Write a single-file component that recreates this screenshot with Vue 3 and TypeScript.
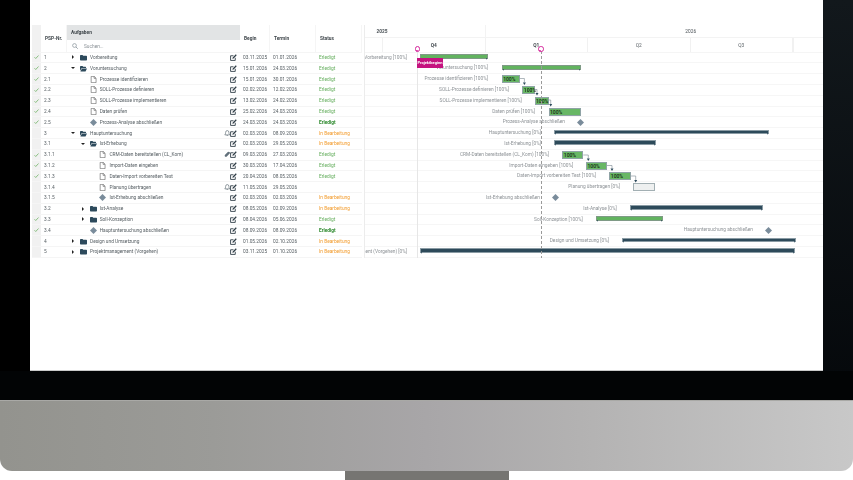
<template>
  <div class="monitor">
    <svg class="defs" width="0" height="0">
      <symbol id="closed" viewBox="0 0 14 12"><path d="M0 2.5Q0 1 1.5 1H5l1.5 1.5h6Q14 2.500 14 4v6.500Q14 12 12.500 12h-11Q0 12 0 10.500z" fill="#2d4a5c" /></symbol>
      <symbol id="open" viewBox="0 0 14 12"><path d="M0 2.500Q0 1 1.500 1H5l1.500 1.500h4.500Q12 2.500 12 4v1H3.500L0 10.500zM3.800 6H14l-3 6H.8z" fill="#2d4a5c" /></symbol>
      <symbol id="file" viewBox="0 0 10 12"><path d="M1 .6h5.200L9.400 3.800v7.600H1zM6 .8v3.200h3.200" fill="#fff" stroke="#555" stroke-width="1" /></symbol>
      <symbol id="ms" viewBox="0 0 12 12"><path d="M6 0l6 6-6 6-6-6z" fill="#7a8c9b" /></symbol>
      <symbol id="edit" viewBox="0 0 12 12"><path d="M9 6.500V11H1V3h5" fill="none" stroke="#2f3d46" stroke-width="1.500" /><path d="M4 8.200l.6-2.200L10 .6l1.500 1.500L6.200 7.500z" fill="#2f3d46" /></symbol>
      <symbol id="bell" viewBox="0 0 12 12"><path d="M6 1Q9 1 9 4.500Q9 7.500 10.500 9h-9Q3 7.500 3 4.500Q3 1 6 1zM4.800 10.300h2.400" fill="none" stroke="#5a6770" stroke-width="1.200" /></symbol>
      <symbol id="clip" viewBox="0 0 12 12"><path d="M10.500 2.200Q9 .4 7 2L2 7q-1.500 1.800 0 3.200t3.200 0l5.300-5.400q1.200-1.400 0-2.600z" fill="#62717b" /></symbol>
    </svg>

    <div class="bezel">
      <main class="screen">
        <section class="gantt">
          <div class="table">
            <div class="table-head">
              <div class="tick-col"></div>
              <div class="head-cell psp-col">PSP-Nr.</div>
              <div class="task-head">
                <div class="task-title">Aufgaben</div>
                <div class="search">
                  <svg class="search-icon" viewBox="0 0 12 12"><circle cx="5" cy="5" r="3.800" fill="none" stroke="#7d8a92" stroke-width="1.300" /><path d="M8 8l3.500 3.500" stroke="#7d8a92" stroke-width="1.500" /></svg>
                  <span>Suchen...</span>
                </div>
              </div>
              <div class="head-cell begin-col">Begin</div>
              <div class="head-cell end-col">Termin</div>
              <div class="head-cell status-col">Status</div>
            </div>

            <div v-for="row in rows" :key="row.nr" class="table-row">
              <div class="tick-col">
                <svg v-if="row.done" class="check" viewBox="0 0 10 8"><path d="M1 4.500l2.500 2.500L9 1" fill="none" stroke="#5cab50" stroke-width="1.400" /></svg>
              </div>
              <div class="psp-col cell">{{ row.nr }}</div>
              <div class="task-col" :style="{ paddingLeft: 2 + row.depth * 9.7 + 'px' }">
                <span class="caret" :class="row.kind"></span>
                <svg class="type-icon"><use :href="'#' + row.kind" /></svg>
                <span class="task-name">{{ row.name }}</span>
                <svg v-if="row.flag" class="flag-icon"><use :href="'#' + row.flag" /></svg>
                <svg class="edit-icon"><use href="#edit" /></svg>
              </div>
              <div class="begin-col cell">{{ row.begin }}</div>
              <div class="end-col cell">{{ row.end }}</div>
              <div class="status-col cell" :class="statusClass(row)">{{ row.status }}</div>
            </div>
          </div>

          <div class="chart">
            <div class="years">
              <div class="year y2025">2025</div>
              <div class="year y2026">2026</div>
            </div>
            <div class="quarters">
              <div class="quarter stub"></div>
              <div v-for="q in quarters" :key="q" class="quarter full" :class="{ strong: q === 'Q4' || q === 'Q1' }">{{ q }}</div>
              <div class="quarter"></div>
            </div>

            <div v-for="row in rows" :key="row.nr" class="chart-row">
              <span class="bar-label" :style="{ left: row.bar.labelEnd - 365 + 'px' }">{{ row.bar.label }}</span>
              <span
                v-if="row.bar.type === 'ms'"
                class="ms-mark"
                :style="{ left: row.bar.x - 365 + 'px' }"
              ><svg><use href="#ms" /></svg></span>
              <span
                v-else
                class="bar"
                :class="row.bar.type"
                :style="{ left: row.bar.x - 365 + 'px', width: (row.bar.w ?? 0) + 'px' }"
              >{{ row.bar.type === 'task' ? '100%' : '' }}</span>
            </div>

            <!-- Projektbeginn / heute und Abhaengigkeiten liegen ueber den Zeilen -->
            <div class="start-line"></div>
            <div class="today-line"></div>
            <span class="pin start-pin"></span>
            <span class="pin today-pin"></span>
            <span class="start-tag">Projektbeginn</span>
            <svg class="links" viewBox="365 25 458 236">
              <g v-for="l in links" :key="l.x">
                <path :d="`M${l.from} ${l.y}H${l.x}V${l.to - 2}`" fill="none" stroke="#7b8890" stroke-width=".6" />
                <path :d="`M${l.x - 1.500} ${l.to - 2}h3l-1.500 2.500z`" fill="#2d4a5c" />
              </g>
            </svg>
          </div>
        </section>
      </main>
    </div>
    <div class="chin"></div>
    <div class="stand"></div>
  </div>
</template>

<script setup lang="ts">
type Kind = 'closed' | 'open' | 'file' | 'ms'
type BarType = 'sum-green' | 'sum-dark' | 'task' | 'empty' | 'ms'

interface Bar {
  type: BarType
  x: number
  w?: number
  label: string
  labelEnd: number
}

interface Row {
  nr: string
  name: string
  depth: number
  kind: Kind
  done?: boolean
  flag?: 'bell' | 'clip'
  begin: string
  end: string
  status: string
  bar: Bar
}

const OK = 'Erledigt'
const WIP = 'In Bearbeitung'

const rows: Row[] = [
  { nr: '1', name: 'Vorbereitung', depth: 0, kind: 'closed', done: true, begin: '03.11.2025', end: '01.01.2026', status: OK, bar: { type: 'sum-green', x: 420, w: 68, label: 'Vorbereitung [100%]', labelEnd: 407 } },
  { nr: '2', name: 'Voruntersuchung', depth: 0, kind: 'open', done: true, begin: '15.01.2026', end: '24.03.2026', status: OK, bar: { type: 'sum-green', x: 502, w: 79, label: 'Voruntersuchung [100%]', labelEnd: 488 } },
  { nr: '2.1', name: 'Prozesse identifizieren', depth: 1, kind: 'file', done: true, begin: '15.01.2026', end: '30.01.2026', status: OK, bar: { type: 'task', x: 501.7, w: 18.5, label: 'Prozesse identifizieren [100%]', labelEnd: 488 } },
  { nr: '2.2', name: 'SOLL-Prozesse definieren', depth: 1, kind: 'file', done: true, begin: '02.02.2026', end: '12.02.2026', status: OK, bar: { type: 'task', x: 522.3, w: 12.7, label: 'SOLL-Prozesse definieren [100%]', labelEnd: 509 } },
  { nr: '2.3', name: 'SOLL-Prozesse implementieren', depth: 1, kind: 'file', done: true, begin: '13.02.2026', end: '24.02.2026', status: OK, bar: { type: 'task', x: 534.5, w: 14, label: 'SOLL-Prozesse implementieren [100%]', labelEnd: 521.7 } },
  { nr: '2.4', name: 'Daten prüfen', depth: 1, kind: 'file', done: true, begin: '25.02.2026', end: '24.03.2026', status: OK, bar: { type: 'task', x: 548.5, w: 32, label: 'Daten prüfen [100%]', labelEnd: 535 } },
  { nr: '2.5', name: 'Prozess-Analyse abschließen', depth: 1, kind: 'ms', done: true, begin: '24.03.2026', end: '24.03.2026', status: OK, bar: { type: 'ms', x: 580.3, label: 'Prozess-Analyse abschließen', labelEnd: 565 } },
  { nr: '3', name: 'Hauptuntersuchung', depth: 0, kind: 'open', flag: 'bell', begin: '02.03.2026', end: '08.09.2026', status: WIP, bar: { type: 'sum-dark', x: 554, w: 215, label: 'Hauptuntersuchung [0%]', labelEnd: 541 } },
  { nr: '3.1', name: 'Ist-Erhebung', depth: 1, kind: 'open', begin: '02.03.2026', end: '29.05.2026', status: WIP, bar: { type: 'sum-dark', x: 554, w: 101.5, label: 'Ist-Erhebung [0%]', labelEnd: 541 } },
  { nr: '3.1.1', name: 'CRM-Daten bereitstellen (CL_Kom)', depth: 2, kind: 'file', done: true, flag: 'clip', begin: '09.03.2026', end: '27.03.2026', status: OK, bar: { type: 'task', x: 562.3, w: 21, label: 'CRM-Daten bereitstellen (CL_Kom) [100%]', labelEnd: 549 } },
  { nr: '3.1.2', name: 'Import-Daten eingeben', depth: 2, kind: 'file', done: true, begin: '30.03.2026', end: '17.04.2026', status: OK, bar: { type: 'task', x: 586, w: 21, label: 'Import-Daten eingeben [100%]', labelEnd: 573.3 } },
  { nr: '3.1.3', name: 'Daten-Import vorbereiten Test', depth: 2, kind: 'file', done: true, begin: '20.04.2026', end: '08.05.2026', status: OK, bar: { type: 'task', x: 609.3, w: 21.7, label: 'Daten-Import vorbereiten Test [100%]', labelEnd: 596 } },
  { nr: '3.1.4', name: 'Planung übertragen', depth: 2, kind: 'file', flag: 'bell', begin: '11.05.2026', end: '29.05.2026', status: '', bar: { type: 'empty', x: 633.3, w: 21.7, label: 'Planung übertragen [0%]', labelEnd: 620 } },
  { nr: '3.1.5', name: 'Ist-Erhebung abschließen', depth: 2, kind: 'ms', begin: '02.03.2026', end: '02.03.2026', status: WIP, bar: { type: 'ms', x: 555.3, label: 'Ist-Erhebung abschließen', labelEnd: 540 } },
  { nr: '3.2', name: 'Ist-Analyse', depth: 1, kind: 'closed', begin: '08.05.2026', end: '02.09.2026', status: WIP, bar: { type: 'sum-dark', x: 630, w: 132.7, label: 'Ist-Analyse [0%]', labelEnd: 616.7 } },
  { nr: '3.3', name: 'Soll-Konzeption', depth: 1, kind: 'closed', done: true, begin: '08.04.2026', end: '05.06.2026', status: OK, bar: { type: 'sum-green', x: 596, w: 67, label: 'Soll-Konzeption [100%]', labelEnd: 582.7 } },
  { nr: '3.4', name: 'Hauptuntersuchung abschließen', depth: 1, kind: 'ms', done: true, begin: '08.09.2026', end: '08.09.2026', status: OK, bar: { type: 'ms', x: 768.7, label: 'Hauptuntersuchung abschließen', labelEnd: 753 } },
  { nr: '4', name: 'Design und Umsetzung', depth: 0, kind: 'closed', begin: '01.05.2026', end: '02.10.2026', status: WIP, bar: { type: 'sum-dark', x: 622, w: 174, label: 'Design und Umsetzung [0%]', labelEnd: 609 } },
  { nr: '5', name: 'Projektmanagement (Vorgehen)', depth: 0, kind: 'closed', begin: '03.11.2025', end: '01.10.2026', status: WIP, bar: { type: 'sum-dark', x: 420, w: 375, label: 'Projektmanagement (Vorgehen) [0%]', labelEnd: 407 } }
]

const quarters = ['Q4', 'Q1', 'Q2', 'Q3']

const links = [
  { from: 520, y: 78.5, x: 524.4, to: 84.5 },
  { from: 535, y: 89.5, x: 537, to: 95 },
  { from: 548.5, y: 100, x: 550.7, to: 106 },
  { from: 583.3, y: 155, x: 588.3, to: 160.5 },
  { from: 607, y: 165.5, x: 612, to: 170.5 },
  { from: 631, y: 176, x: 635.7, to: 182 }
]

const statusClass = (row: Row) => {
  if (row.status === WIP) return 'wip'
  return row.kind === 'ms' ? 'ok-strong' : 'ok'
}
</script>

<style scoped>
.defs {
  position: absolute;
}

.monitor {
  width: 853px;
  height: 480px;
  overflow: hidden;
  display: flex;
  flex-direction: column;
  font-family: Roboto, "Liberation Sans", sans-serif;
  font-size: 4.8px;
  color: #555d62;
}

.bezel {
  height: 400px;
  flex: none;
  box-sizing: border-box;
  padding: 0 30px 29px 30px;
  background:
    linear-gradient(#020405, #020405) left bottom / 100% 29px no-repeat,
    linear-gradient(#12181c, #05080b) right top / 30px 100% no-repeat,
    #000;
}

.screen {
  height: 100%;
  box-sizing: border-box;
  padding: 25px 0 0 2px;
  background: #fff;
  border-bottom: 1px solid #c9c9c9;
}

.gantt {
  display: flex;
  gap: 3px;
  filter: blur(0.4px);
}

.table {
  width: 330px;
  flex: none;
}

.table-head {
  display: flex;
  height: 27.6px;
  border-bottom: 1px solid #f5f5f5;
  box-sizing: border-box;
}

.table-row {
  display: flex;
  align-items: stretch;
  height: 10.8px;
  box-sizing: border-box;
  border-bottom: 0.5px solid #f5f5f5;
}

.tick-col {
  width: 9px;
  flex: none;
  background: #f1f1f1;
  display: flex;
  align-items: center;
  justify-content: center;
}

.check {
  width: 5px;
  height: 4px;
}

.psp-col {
  width: 26px;
  flex: none;
}

.begin-col {
  width: 30px;
  flex: none;
}

.end-col {
  width: 46px;
  flex: none;
}

.status-col {
  flex: 1;
}

.head-cell {
  display: flex;
  align-items: center;
  padding-left: 4px;
  box-sizing: border-box;
  font-weight: 700;
  color: #3f464b;
  border-right: 0.5px solid #f5f5f5;
}

.cell {
  display: flex;
  align-items: center;
  padding-left: 3px;
  box-sizing: border-box;
}

.ok {
  color: #63ad5c;
}

.ok-strong {
  color: #2f8a2f;
  font-weight: 700;
}

.wip {
  color: #f29b2c;
}

.task-head {
  width: 173px;
  flex: none;
}

.task-title {
  height: 15px;
  background: #e2e4e5;
  padding-left: 4px;
  display: flex;
  align-items: center;
  font-weight: 700;
  color: #3f464b;
}

.search {
  height: 12px;
  padding-left: 5px;
  display: flex;
  align-items: center;
  gap: 6px;
  color: #8b9297;
}

.search-icon {
  width: 6px;
  height: 6px;
}

.task-col {
  width: 173px;
  flex: none;
  box-sizing: border-box;
  display: flex;
  align-items: center;
  padding-right: 3px;
}

.caret {
  width: 8px;
  flex: none;
  display: flex;
  justify-content: center;
}

.caret.closed::before {
  content: "";
  border-left: 2.5px solid #222;
  border-top: 2px solid transparent;
  border-bottom: 2px solid transparent;
}

.caret.open::before {
  content: "";
  border-top: 2.5px solid #222;
  border-left: 2px solid transparent;
  border-right: 2px solid transparent;
}

.type-icon {
  width: 7px;
  height: 7px;
  flex: none;
  margin: 0 3px;
}

.task-name {
  flex: 1;
  white-space: nowrap;
}

.flag-icon {
  width: 6.500px;
  height: 6.500px;
  flex: none;
}

.edit-icon {
  width: 7px;
  height: 7px;
  flex: none;
}

.chart {
  position: relative;
  flex: 1;
  overflow: hidden;
  border-left: 1px solid #ececec;
  margin-left: -1px;
}

.years {
  display: flex;
  height: 13px;
  border-bottom: 0.5px solid #f3f3f3;
  box-sizing: border-box;
}

.year {
  display: flex;
  align-items: center;
  justify-content: center;
  box-sizing: border-box;
  color: #4a5156;
}

.y2025 {
  width: 120.500px;
  padding-right: 85.500px;
  font-weight: 700;
  border-right: 0.5px solid #f3f3f3;
}

.y2026 {
  flex: 1;
  padding-left: 73px;
}

.quarters {
  display: flex;
  height: 14.600px;
  border-bottom: 1px solid #f5f5f5;
  box-sizing: border-box;
}

.quarter {
  display: flex;
  align-items: center;
  justify-content: center;
  box-sizing: border-box;
  padding-top: 1px;
  color: #5c6368;
  border-right: 0.5px solid #f1f1f1;
}

.strong {
  font-weight: 700;
  color: #3f464b;
}

.stub {
  width: 18px;
}

.full {
  width: 102.500px;
}

.chart-row {
  position: relative;
  height: 10.800px;
  box-sizing: border-box;
  border-bottom: 0.5px solid #f6f6f6;
}

.bar-label {
  position: absolute;
  top: 2px;
  transform: translateX(-100%);
  white-space: nowrap;
  color: #8d9296;
}

.bar {
  position: absolute;
  box-sizing: border-box;
}

.task {
  top: 1px;
  height: 8px;
  background: #68b765;
  border: 0.7px solid #8fa3a5;
  color: #10260f;
  font-size: 5px;
  font-weight: 500;
  line-height: 7px;
  padding-left: 0.500px;
}

.empty {
  top: 1px;
  height: 8px;
  background: #eef0f0;
  border: 0.8px solid #a2afb3;
}

.sum-green,
.sum-dark {
  top: 1.500px;
  height: 4.800px;
}

.sum-green {
  background: #62b35f;
  border: 0.6px solid #7f9a86;
}

.sum-dark {
  background: #2d4a5a;
  border: 0.4px solid #8a9ba4;
}

.sum-green::before,
.sum-green::after,
.sum-dark::before,
.sum-dark::after {
  content: "";
  position: absolute;
  top: 100%;
  border-top: 2.500px solid #2d4a5a;
}

.sum-green::before,
.sum-dark::before {
  left: 0;
  border-right: 1.500px solid transparent;
}

.sum-green::after,
.sum-dark::after {
  right: 0;
  border-left: 1.500px solid transparent;
}

.ms-mark {
  position: absolute;
  top: 1.400px;
  width: 7px;
  height: 7px;
  margin-left: -3.500px;
}

.ms-mark svg {
  display: block;
  width: 7px;
  height: 7px;
}

.start-line {
  position: absolute;
  left: 52px;
  top: 27px;
  bottom: 0;
  border-left: 0.7px solid #e6e6e6;
}

.today-line {
  position: absolute;
  left: 175.500px;
  top: 26px;
  height: 208px;
  border-left: 1.200px dashed #9a9a9a;
}

.pin {
  position: absolute;
  top: 21.300px;
  width: 5.500px;
  height: 5.500px;
  box-sizing: border-box;
  border-radius: 50%;
  border: 1.500px solid #d4259a;
  background: #fff;
}

.pin::after {
  content: "";
  position: absolute;
  left: 0;
  top: 2.500px;
  border-top: 2px solid #d4259a;
  border-left: 1.250px solid transparent;
  border-right: 1.250px solid transparent;
}

.start-pin {
  left: 49.750px;
}

.today-pin {
  left: 173.250px;
}

.start-tag {
  position: absolute;
  left: 52px;
  top: 33px;
  width: 26px;
  height: 9.500px;
  display: flex;
  align-items: center;
  justify-content: center;
  background: #c5127f;
  color: #fff;
  font-size: 4px;
  font-weight: 700;
  white-space: nowrap;
}

.links {
  position: absolute;
  left: 0;
  top: 0;
  width: 458px;
  height: 236px;
  pointer-events: none;
}

.chin {
  height: 71px;
  flex: none;
  border-top: 1px solid #a9a9a6;
  box-sizing: border-box;
  border-radius: 0 0 12px 12px;
  background: linear-gradient(90deg, #93938e 0%, #9b9b98 25%, #a8a6a8 50%, #b3b2b2 68%, #c8c8c8 100%);
}

.stand {
  width: 164px;
  height: 9px;
  flex: none;
  margin-left: 345px;
  background: #767572;
}
</style>

<style>
body {
  background: #fff;
}
</style>
